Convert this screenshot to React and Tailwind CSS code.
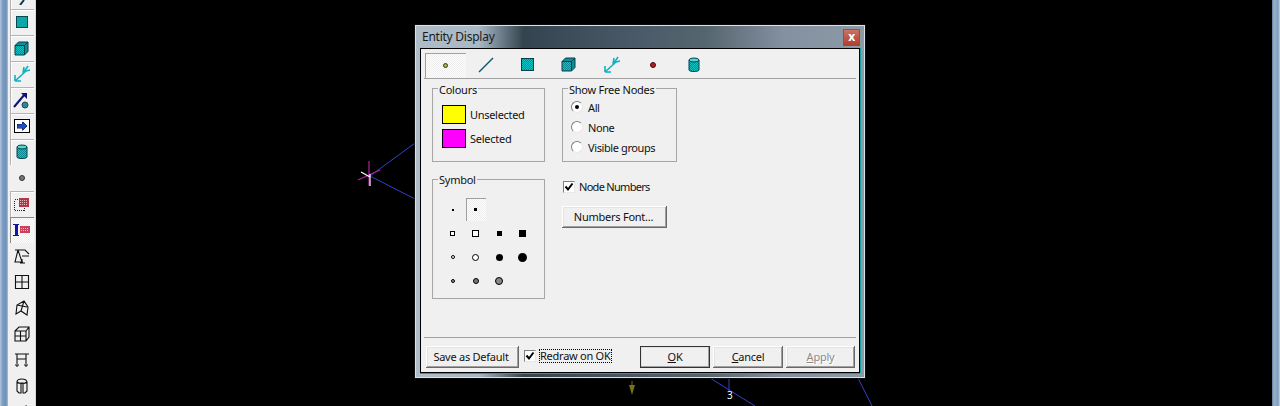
const TEAL = 'url(#dither)'
const DARK = '#06404a'

const raised =
  'shadow-[inset_-1px_-1px_0_#696969,inset_1px_1px_0_#ffffff,inset_-2px_-2px_0_#a0a0a0,inset_2px_2px_0_#e3e3e3]'

const dithered = 'bg-[repeating-conic-gradient(#ffffff_0_25%,#ececec_0_50%)] bg-[length:2px_2px]'

// Toolbar and tab drawings
const SquareIcon = ({ s = 13 }) => (
  <svg width={s} height={s} viewBox="0 0 13 13" shapeRendering="crispEdges" className="block">
    <rect x="0.5" y="0.5" width="12" height="12" fill={TEAL} stroke={DARK} />
  </svg>
)
const CubeIcon = ({ s = 15 }) => (
  <svg width={s} height={s} viewBox="0 0 15 15" className="block">
    <path d="M1 4.5h9.5v9.5H1z" fill={TEAL} stroke={DARK} />
    <path d="M1 4.5L4.5 1H14v9.5L10.5 14V4.5z" fill="#0e8f95" stroke={DARK} />
    <path d="M10.5 4.5L14 1" stroke={DARK} />
  </svg>
)
const MeshArrows = ({ s = 18 }) => (
  <svg width={s} height={s} viewBox="0 0 18 18" fill="none" stroke="#0fb3bd" strokeWidth="1.6" className="block">
    <path d="M2 16L13 6M2 16V10M2 16H8" />
    <path d="M10 8L11 2M13 6L17 5M11 7L15 1" />
  </svg>
)
const Cylinder = ({ s = 14 }) => (
  <svg width={s - 2} height={s + 2} viewBox="0 0 12 16" className="block">
    <path d="M1 3v10c0 2 10 2 10 0V3z" fill={TEAL} stroke={DARK} />
    <ellipse cx="6" cy="3" rx="5" ry="2" fill="#4fd6d6" stroke={DARK} />
  </svg>
)
const ArrowBall = () => (
  <svg width="18" height="18" viewBox="0 0 18 18" className="block">
    <path d="M1 16L12 3" stroke="#10106e" strokeWidth="2" />
    <path d="M8 2h6v6z" fill="#10106e" />
    <circle cx="12" cy="14" r="3" fill="#2b8a92" stroke="#1e4a52" />
  </svg>
)
const ArrowBox = () => (
  <svg width="16" height="14" viewBox="0 0 16 14" shapeRendering="crispEdges" className="block">
    <rect x="0.5" y="0.5" width="15" height="13" fill="#fff" stroke="#000" />
    <path d="M3 5h5V3l1 0 1 1 1 1 1 1 1 1-1 1-1 1-1 1-1 1H8V9H3z" fill="#1c4fc0" stroke="#101050" strokeWidth="0.5" />
  </svg>
)
const TopStub = () => (
  <svg width="18" height="18" viewBox="0 0 18 18" className="block">
    <path d="M7 18L11 13" stroke="#0a3a44" strokeWidth="2" />
  </svg>
)
const Dot = () => <div className="w-[6px] h-[6px] rounded-full bg-[#77777a] border border-[#333]" />
const DottedRed = () => (
  <svg width="16" height="16" viewBox="0 0 16 16" shapeRendering="crispEdges" className="block">
    <rect x="0.5" y="3.5" width="10" height="11" fill="none" stroke="#222" strokeDasharray="1 1" />
    <rect x="5" y="2" width="10" height="9" fill="#b5354a" />
    <path d="M6 4h8M6 6h8M6 8h8" stroke="#e8b0b8" strokeDasharray="1 1" />
  </svg>
)
const IRed = () => (
  <svg width="18" height="14" viewBox="0 0 18 14" shapeRendering="crispEdges" className="block">
    <path d="M0 1h6M0 12h6M2 1h2v11H2z" stroke="#1414a0" fill="#1414a0" />
    <rect x="7" y="3" width="10" height="7" fill="#c8405a" />
    <path d="M8 5h8M8 7h8" stroke="#efc0c8" strokeDasharray="1 1" />
  </svg>
)
const Wire = ({ children }) => (
  <svg width="16" height="16" viewBox="0 0 16 16" fill="none" stroke="#111" strokeWidth="1.1" className="block">
    {children}
  </svg>
)

const toolbar = [
  { el: <TopStub />, frame: true },
  { el: <SquareIcon s={12} />, frame: true },
  { el: <CubeIcon />, frame: true },
  { el: <MeshArrows />, frame: true },
  { el: <ArrowBall />, frame: true },
  { el: <ArrowBox />, frame: true },
  { el: <Cylinder />, frame: true },
  { el: <Dot /> },
  { el: <DottedRed />, frame: true },
  { el: <IRed />, pressed: true },
  { el: <Wire><path d="M1 2h10l4 4M4 2L1 14h8M4 2l4 12M8 8h7M8 11v3M6 15h5" /></Wire> },
  { el: <Wire><path d="M1.5 1.5h13v13h-13zM8 1.5v13M1.5 8h13" /></Wire> },
  { el: <Wire><path d="M10 1L3 5l-1 9 5-3 6 4 1-8zM10 1L7 11M3 5l10 2" /></Wire> },
  { el: <Wire><path d="M1 5h11v10H1zM1 5l4-4h10v10l-3 4M12 5l3-4M6.5 5v10M1 10h11" /></Wire> },
  { el: <Wire><path d="M1 2h14M3 2v10M12 2v10M3 7h9M1 13h4M10 13h4M3 13v2M12 13v2" /></Wire> },
  { el: <Wire><path d="M3 4c0-4 10-4 10 0v9l-2 2H9V5H7v10H5l-2-2zM3 4c2 2 8 2 10 0" /></Wire> },
  { el: <Wire><path d="M2 8l10-6v10" /></Wire> },
]

function ToolItem({ el, frame, pressed }) {
  return (
    <div className="h-[26px] flex items-center justify-center relative">
      {frame && <div className="absolute left-[2px] top-0 right-[1px] bottom-0 border-t border-l border-[#b4b4b4] shadow-[inset_1px_1px_0_#ffffff]" />}
      {pressed && <div className={`absolute left-[2px] top-0 right-[1px] bottom-0 border-t border-l border-[#8a8a8a] ${dithered}`} />}
      <div className="relative">{el}</div>
    </div>
  )
}

function Group({ title, className, legendClass = '-top-[6px]', children }) {
  return (
    <div className={`relative border border-[#a6a6a6] ${className}`}>
      <span className={`absolute ${legendClass} left-[5px] bg-[#f0f0f0] px-[1px] leading-[13px]`}>{title}</span>
      {children}
    </div>
  )
}

function Radio({ checked, label }) {
  return (
    <div className="flex items-center h-[20px]">
      <div className="w-[12px] h-[12px] rounded-full bg-white border border-t-[#808080] border-l-[#808080] border-r-[#e8e8e8] border-b-[#e8e8e8] flex items-center justify-center">
        {checked && <div className="w-[4px] h-[4px] rounded-full bg-black" />}
      </div>
      <span className="ml-[5px] pt-[2px] tracking-[-0.4px]">{label}</span>
    </div>
  )
}

function Check() {
  return (
    <div className="w-[12px] h-[12px] bg-white border border-t-[#808080] border-l-[#808080] border-r-[#e8e8e8] border-b-[#e8e8e8] flex items-center justify-center">
      <svg width="10" height="10" viewBox="0 0 10 10" className="block">
        <path d="M1.5 4.5L4 7.5L8.5 1.5" fill="none" stroke="#000" strokeWidth="2" />
      </svg>
    </div>
  )
}

function Btn({ className = '', children }) {
  return (
    <div className={`h-[22px] flex items-center justify-center bg-[#f0f0f0] ${raised} ${className}`}>{children}</div>
  )
}

const symbols = [
  <div className="w-[2px] h-[2px] bg-black" />,
  <div className="w-[3px] h-[3px] bg-black" />,
  null,
  null,
  <div className="w-[5px] h-[5px] border border-black bg-white" />,
  <div className="w-[7px] h-[7px] border border-black bg-white" />,
  <div className="w-[5px] h-[5px] bg-black" />,
  <div className="w-[7px] h-[7px] bg-black" />,
  <div className="w-[4px] h-[4px] rounded-full border border-black bg-white" />,
  <div className="w-[7px] h-[7px] rounded-full border border-black bg-white" />,
  <div className="w-[7px] h-[7px] rounded-full bg-black" />,
  <div className="w-[9px] h-[9px] rounded-full bg-black" />,
  <div className="w-[4px] h-[4px] rounded-full border border-black bg-[#999]" />,
  <div className="w-[6px] h-[6px] rounded-full border border-black bg-[#777]" />,
  <div className="w-[8px] h-[8px] rounded-full border border-black bg-[#888]" />,
  null,
]

const tabs = [
  <div className="w-[5px] h-[5px] rounded-full bg-[#b8b820] border border-[#333]" />,
  <svg width="16" height="16" viewBox="0 0 16 16" className="block"><path d="M1 15L15 1" stroke="#0a5a70" strokeWidth="1.4" /></svg>,
  <SquareIcon />,
  <CubeIcon />,
  <MeshArrows />,
  <div className="w-[6px] h-[6px] rounded-full bg-[#c01818] border border-[#401010]" />,
  <Cylinder />,
]

export default function App() {
  return (
    <div className="w-[1280px] h-[406px] flex overflow-hidden bg-black text-[11px] tracking-[-0.25px] text-[#111] font-['Noto_Sans',sans-serif]">
      <svg width="0" height="0" className="absolute">
        <defs>
          <pattern id="dither" width="2" height="2" patternUnits="userSpaceOnUse">
            <rect width="2" height="2" fill="#10c4c4" />
            <rect width="1" height="1" fill="#0a8a90" />
            <rect x="1" y="1" width="1" height="1" fill="#0a8a90" />
          </pattern>
        </defs>
      </svg>

      <div className="w-[8px] bg-[linear-gradient(90deg,#b4c8dc_0%,#7f9fc4_30%,#6f90b8_75%,#a9bfd6_100%)]" />
      <div className="w-[28px] shrink-0 bg-[#f0f0f0] border-r border-[#d8d8d8] -mt-[17px]">
        {toolbar.map((t, i) => (
          <ToolItem key={i} {...t} />
        ))}
      </div>

      {/* Model canvas with the dialog floating over it */}
      <div className="relative flex-1 bg-black">
        <svg width="1236" height="406" className="absolute left-0 top-0">
          <path d="M334 176L379 143M334 176L379 199M674 378L719 406M693 378V391M822 378L836 406" stroke="#3340c8" strokeWidth="1" fill="none" />
          <path d="M333 161V186M322 180L344 170" stroke="#b020a0" strokeWidth="1.2" />
          <path d="M325 172L334 177M334 174V186" stroke="#ffffff" strokeWidth="1.2" />
          <path d="M596 381V392" stroke="#706a10" strokeWidth="1" />
          <path d="M593 385H599L596 395z" fill="#77701a" />
        </svg>
        <span className="absolute left-[691px] top-[388px] text-[10px] leading-[14px] text-white">3</span>

        {/* Entity Display */}
        <div className="absolute left-[379px] top-[25px] w-[450px] h-[353px] flex flex-col border border-[#d8e4ea] shadow-[0_0_0_1px_#0c0c0c] bg-[linear-gradient(90deg,#aebdc8_0%,#a8b8c4_14%,#34444f_24%,#4a5a68_50%,#56666f_65%,#8390a0_82%,#8c9aa6_100%)]">
          <div className="h-[22px] flex items-center pl-[6px] pr-[4px] justify-between shrink-0">
            <span className="text-[12px] text-[#1a1a1a]">Entity Display</span>
            <div className="w-[17px] h-[17px] bg-[linear-gradient(180deg,#cc7263,#b04030)] border border-[#6a6060] flex items-center justify-center text-white text-[12px] font-bold leading-none">
              x
            </div>
          </div>
          <div className="flex-1 mx-[4px] mb-[4px] border border-black bg-[#f0f0f0] shadow-[0_1px_0_#18a0a8,1px_0_0_#18a0a8] flex flex-col px-[3px]">
            {/* Tab strip */}
            <div className="flex h-[30px] border-b border-[#a0a0a0] pt-[4px] pl-[1px] shrink-0">
              {tabs.map((t, i) => (
                <div
                  key={i}
                  className={`w-[41px] h-[25px] flex items-center justify-center pb-[2px] ${
                    i === 0 ? `border-t border-l border-[#a0a0a0] ${dithered}` : ''
                  } ${i === 4 ? 'ml-[3px]' : ''} ${i === 2 || i === 3 ? '' : 'pr-[2px]'}`}
                >
                  {t}
                </div>
              ))}
            </div>

            {/* Body */}
            <div className="flex-1 flex gap-[17px] pl-[8px] pt-[9px]">
              <div className="flex flex-col gap-[17px]">
                <Group title="Colours" className="w-[113px] h-[74px] pl-[9px] pt-[16px]">
                  <div className="flex items-center gap-[4px] h-[19px]">
                    <div className="w-[24px] h-[19px] bg-[#ffff00] border border-black" />
                    <span className="pt-[2px] tracking-[-0.3px]">Unselected</span>
                  </div>
                  <div className="flex items-center gap-[4px] h-[19px] mt-[5px]">
                    <div className="w-[24px] h-[19px] bg-[#ff00ff] border border-black" />
                    <span className="pt-[2px]">Selected</span>
                  </div>
                </Group>
                <Group title="Symbol" legendClass="-top-[7px]" className="w-[113px] h-[120px] pl-[8px] pt-[18px]">
                  <div className="grid grid-cols-4 w-[93px] relative">
                    <div className={`absolute left-[25px] top-0 w-[20px] h-[23px] border-t border-l border-[#a0a0a0] ${dithered}`} />
                    {symbols.map((c, i) => (
                      <div key={i} className="relative h-[23.7px] flex items-center justify-center">
                        {c}
                      </div>
                    ))}
                  </div>
                </Group>
              </div>

              <div>
                <Group title="Show Free Nodes" className="w-[115px] h-[74px] pl-[8px] pt-[8px]">
                  <Radio checked label="All" />
                  <Radio label="None" />
                  <Radio label="Visible groups" />
                </Group>
                <div className="flex items-center gap-[4px] mt-[18px] ml-[1px] h-[14px]">
                  <Check />
                  <span className="tracking-[-0.7px]">Node Numbers</span>
                </div>
                <Btn className="w-[105px] mt-[12px] pr-[2px]">Numbers Font...</Btn>
              </div>
            </div>

            {/* Footer */}
            <div className="border-t border-[#a0a0a0] h-[35px] flex items-start pt-[8px] pl-[2px] shrink-0">
              <Btn className="w-[93px] pr-[3px]">Save as Default</Btn>
              <div className="flex items-center ml-[5px] h-[22px] -mt-[1px]">
                <Check />
                <span className="ml-[3px] border border-dotted border-black leading-[12px]">Redraw on OK</span>
              </div>
              <Btn className="w-[70px] ml-auto outline outline-1 outline-[#333] -outline-offset-1">
                <span><span className="underline">O</span>K</span>
              </Btn>
              <Btn className="w-[70px] ml-[3px]">
                <span><span className="underline">C</span>ancel</span>
              </Btn>
              <Btn className="w-[69px] ml-[3px] mr-[1px] text-[#8a8a8a] [text-shadow:1px_1px_0_#ffffff]">
                <span><span className="underline">A</span>pply</span>
              </Btn>
            </div>
          </div>
        </div>
      </div>

      <div className="w-[8px] bg-[linear-gradient(90deg,#5f80a4_0%,#9ab2c8_25%,#7f9dbc_75%,#c8d6e4_100%)]" />
    </div>
  )
}
